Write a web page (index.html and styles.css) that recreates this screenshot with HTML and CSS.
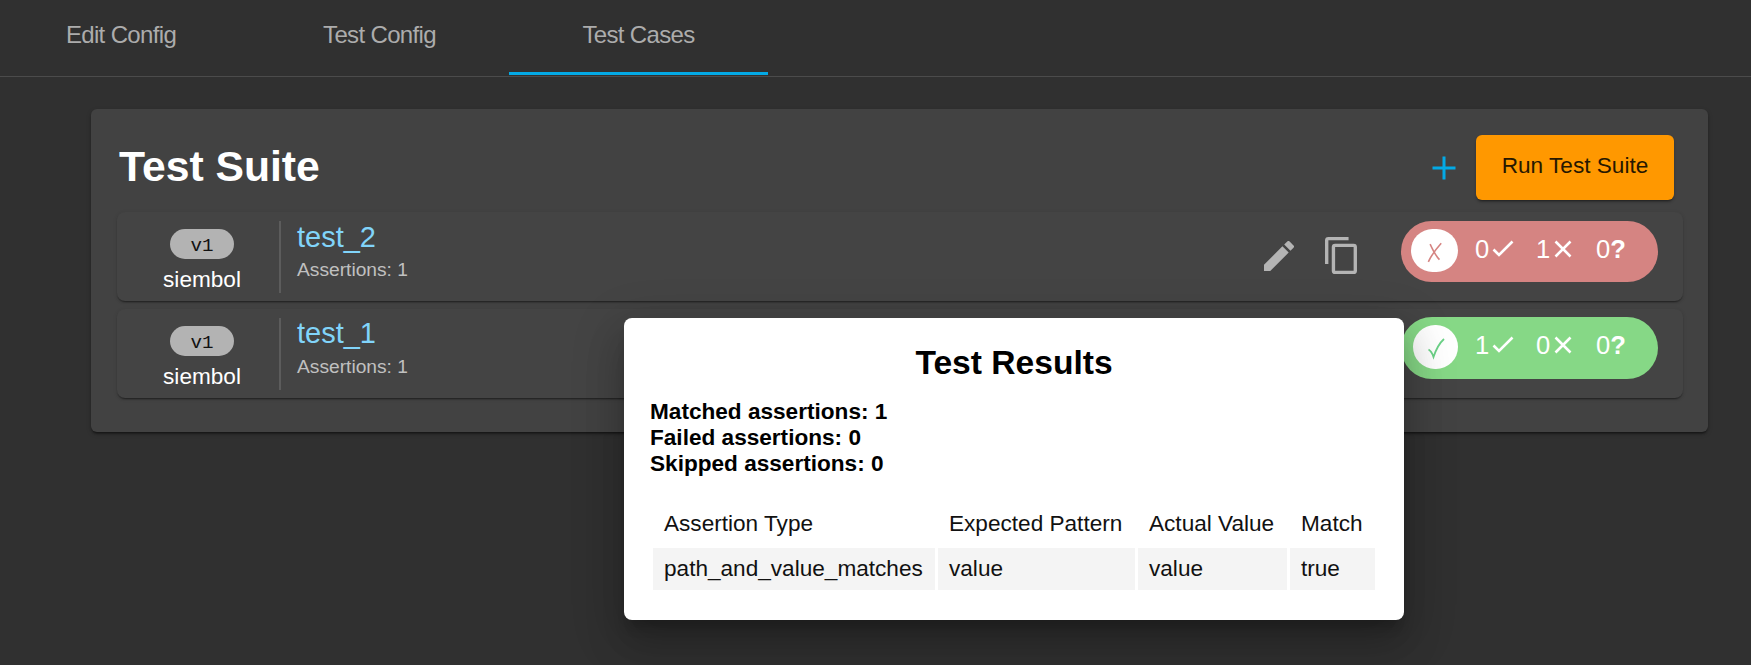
FILE: index.html
```html
<!DOCTYPE html>
<html lang="en">
<head>
<meta charset="utf-8">
<title>Test Cases</title>
<link rel="stylesheet" href="styles.css">
</head>
<body>
<nav class="tabs">
  <a class="tab first">Edit Config</a>
  <a class="tab">Test Config</a>
  <a class="tab active">Test Cases</a>
</nav>
<main class="card">
  <header class="head">
    <h1>Test Suite</h1>
    <svg class="plus" viewBox="0 0 24 24"><path d="M12 0.5v23M0.5 12h23"/></svg>
    <button class="run">Run Test Suite</button>
  </header>
  <section class="row">
    <div class="meta"><span class="chip">v1</span><span class="author">siembol</span></div>
    <div class="info"><span class="name">test_2</span><span class="count">Assertions: 1</span></div>
    <svg class="pencil" viewBox="3 3 18 18"><path d="M3 17.25V21h3.75L17.81 9.94l-3.75-3.75L3 17.25zM20.71 7.04a1 1 0 0 0 0-1.41l-2.34-2.34a1 1 0 0 0-1.41 0l-1.83 1.83 3.75 3.75 1.83-1.83z"/></svg>
    <svg class="copy" viewBox="2 1 19 22"><path d="M16 1H4a2 2 0 0 0-2 2v14h2V3h12V1zm3 4H8a2 2 0 0 0-2 2v14a2 2 0 0 0 2 2h11a2 2 0 0 0 2-2V7a2 2 0 0 0-2-2zm0 16H8V7h11v14z"/></svg>
    <div class="pill fail">
      <span class="circle"><svg viewBox="0 0 18 24"><path d="M3.5 2.5C6 8 10 16 14 20M16 1.500C11 7 5 15 1.500 22.500"/></svg></span>
      <span class="score s1">0<svg class="tick" viewBox="0 0 22 17"><path d="M1.500 9.500l5.500 5.500L20.500 1.500"/></svg></span>
      <span class="score s2">1<svg class="cross" viewBox="0 0 18 18"><path d="M1.500 1.500l15 15M16.500 1.500l-15 15"/></svg></span>
      <span class="score s3">0<b>?</b></span>
    </div>
  </section>
  <section class="row last">
    <div class="meta"><span class="chip">v1</span><span class="author">siembol</span></div>
    <div class="info"><span class="name">test_1</span><span class="count">Assertions: 1</span></div>
    <div class="pill pass">
      <span class="circle"><svg viewBox="0 0 18 22"><path d="M1.500 12c2 1 4 4.500 5 7.500C9 12 12 6 17 1.500"/></svg></span>
      <span class="score s1">1<svg class="tick" viewBox="0 0 22 17"><path d="M1.500 9.500l5.500 5.500L20.500 1.500"/></svg></span>
      <span class="score s2">0<svg class="cross" viewBox="0 0 18 18"><path d="M1.500 1.500l15 15M16.500 1.500l-15 15"/></svg></span>
      <span class="score s3">0<b>?</b></span>
    </div>
  </section>
</main>
<aside class="popup">
  <h2>Test Results</h2>
  <div class="summary">
    <div>Matched assertions: 1</div>
    <div>Failed assertions: 0</div>
    <div>Skipped assertions: 0</div>
  </div>
  <div class="results">
    <span>Assertion Type</span><span>Expected Pattern</span><span>Actual Value</span><span>Match</span>
    <span class="val">path_and_value_matches</span><span class="val">value</span><span class="val">value</span><span class="val">true</span>
  </div>
</aside>
</body>
</html>
```
FILE: styles.css
```css
* { box-sizing: border-box; }
body {
  margin: 0;
  height: 665px;
  overflow: hidden;
  background: #303030;
  color: #fff;
  font: 22.4px/26px "Liberation Sans", Arial, sans-serif;
}
svg { display: block; flex: none; }
.tabs {
  display: flex;
  height: 77px;
  border-bottom: 1px solid #4b4b4b;
}
.tab {
  width: 259px;
  height: 75px;
  padding-top: 21px;
  text-align: center;
  font-size: 24px;
  line-height: 28px;
  letter-spacing: -0.65px;
  color: #acacac;
}
.tab.first { width: 250px; padding-right: 8px; }
.tab.active { border-bottom: 3px solid #03a9e5; }
.card {
  margin: 32px 43px 0 91px;
  height: 323px;
  padding: 26px 25.500px 0 26px;
  border-radius: 6px;
  background: #424242;
  box-shadow: 0 3px 2px -2px rgba(0,0,0,.35), 0 2px 2px rgba(0,0,0,.2), 0 2px 5px rgba(0,0,0,.18);
}
.head { display: flex; align-items: flex-start; height: 77px; }
.head h1 {
  flex: 1;
  margin: 0;
  padding: 7px 0 0 2px;
  font-size: 42.700px;
  line-height: 48px;
}
.plus { width: 24px; height: 24px; margin: 21px 20px 0 0; fill: none; stroke: #03a9e5; stroke-width: 3; }
.run {
  width: 198px;
  height: 65px;
  margin-right: 8.500px;
  padding: 0 0 3px;
  border: 0;
  border-radius: 6px;
  background: #ff9800;
  color: #261700;
  font: 22.6px "Liberation Sans", Arial, sans-serif;
  box-shadow: 0 3px 2px -2px rgba(0,0,0,.3), 0 2px 3px rgba(0,0,0,.25);
}
.row {
  display: flex;
  height: 89px;
  margin-bottom: 7.500px;
  padding: 9px 24.500px 0 0;
  border-radius: 8px;
  background: #444;
  box-shadow: 0 2px 2px -1px rgba(0,0,0,.5), 0 1px 4px rgba(0,0,0,.12);
}
.meta {
  display: flex;
  flex-direction: column;
  align-items: center;
  width: 164px;
  height: 72px;
  padding: 8px 0 0 8px;
  border-right: 2px solid #5c5c5c;
}
.chip {
  width: 64px;
  height: 30px;
  border-radius: 15px;
  background: #b3b3b3;
  color: #111;
  font: 19.200px/34px "Liberation Mono", monospace;
  text-align: center;
}
.author { margin-top: 8px; font-size: 22.600px; line-height: 26px; }
.info { flex: 1; display: flex; flex-direction: column; padding-left: 16px; }
.name { font-size: 29px; line-height: 32px; color: #81d4fa; }
.count { margin-top: 6px; font-size: 19.200px; line-height: 22px; color: #c0c0c0; }
.last .name { margin-top: -1px; }
.last .count { margin-top: 7px; }
.pencil { width: 30px; height: 30px; margin: 20px 31px 0 0; fill: #b4b4b4; }
.copy { width: 32px; height: 37px; margin: 16px 44px 0 0; fill: #b4b4b4; }
.pill {
  display: flex;
  width: 257px;
  height: 61px;
  padding: 8px 0 0 10px;
  border-radius: 31px;
  font-size: 25.600px;
  line-height: 30px;
}
.fail { background: #d58482; }
.pass { height: 62px; margin-top: -1px; background: #86d886; }
.circle {
  display: flex;
  justify-content: center;
  width: 47px;
  height: 43px;
  padding-top: 12px;
  border-radius: 22px;
  background: #fff;
}
.pass .circle { width: 45px; height: 44px; margin-left: 2px; }
.circle svg { width: 16px; height: 23px; fill: none; stroke-width: 1.800; }
.fail .circle svg { stroke: #d58482; }
.pass .circle svg { width: 18px; stroke: #6bd287; }
.score { display: flex; padding-top: 6px; height: 36px; line-height: 28px; }
.score svg { fill: none; stroke: #fff; stroke-width: 2.600; }
.s1 { width: 61px; margin-left: 17px; }
.s2 { width: 60px; }
.tick { width: 22px; height: 17px; margin: 5px 0 0 3px; }
.cross { width: 18px; height: 18px; margin: 5px 0 0 4px; }
.popup {
  position: absolute;
  left: 624px;
  top: 318px;
  width: 780px;
  height: 302px;
  padding: 26px;
  border-radius: 8px;
  background: #fff;
  color: #000;
  box-shadow: 0 12px 12px -5px rgba(0,0,0,.2), 0 26px 38px 3px rgba(0,0,0,.14), 0 14px 48px 8px rgba(0,0,0,.15);
}
.popup h2 { margin: 0; font-size: 33.600px; line-height: 38px; text-align: center; }
.summary { margin-top: 17px; font-size: 22.600px; font-weight: bold; }
.results {
  display: grid;
  grid-template-columns: 282px 197px 149px 85px;
  grid-template-rows: 42px 42px;
  gap: 3px;
  margin: 26px 0 0 3px;
  font-size: 22.600px;
  color: #111;
}
.results span { padding-left: 11px; line-height: 42px; }
.results .val { background: #f4f4f4; }
```
